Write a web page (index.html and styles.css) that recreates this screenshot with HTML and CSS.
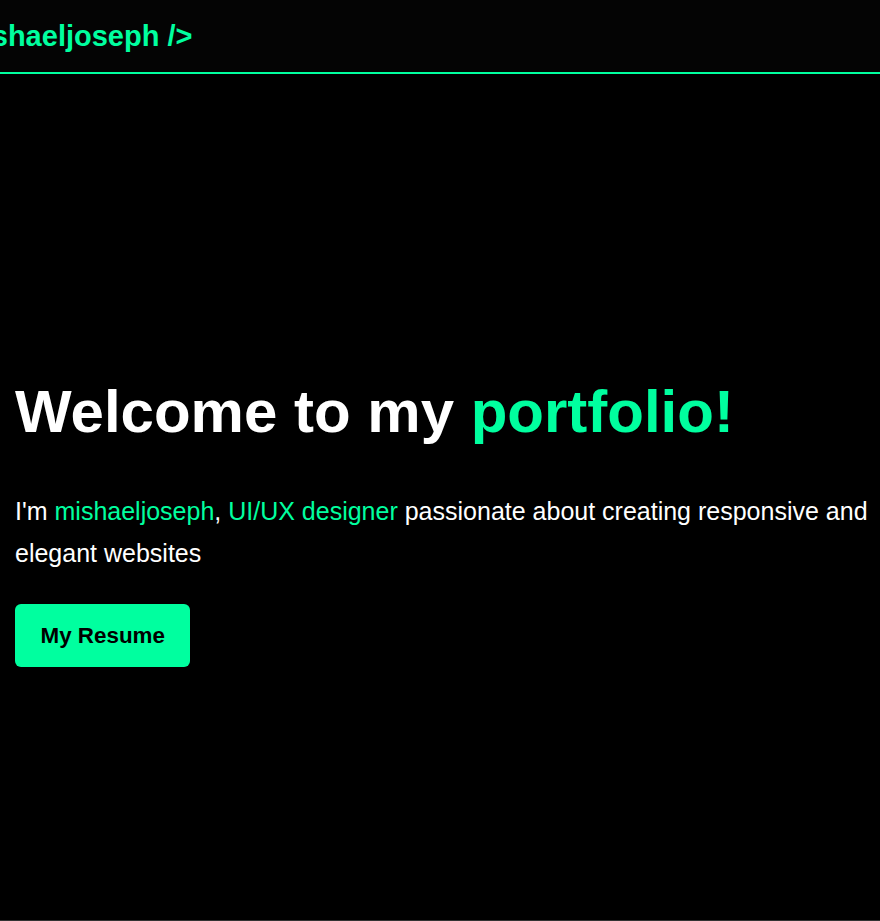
FILE: index.html
```html
<!DOCTYPE html>
<html lang="en">
<head>
<meta charset="utf-8">
<title>mishaeljoseph</title>
<link rel="stylesheet" href="styles.css">
</head>
<body>
<header class="site-header">
  <a class="logo" href="#">&lt;mishaeljoseph /&gt;</a>
</header>
<main class="hero">
  <h1 class="hero-title">Welcome to my <span class="accent">portfolio!</span></h1>
  <p class="hero-text">I'm <span class="accent">mishaeljoseph</span>, <span class="accent">UI/UX designer</span> passionate about creating responsive and elegant websites</p>
  <a class="btn" href="#">My Resume</a>
</main>
</body>
</html>
```

FILE: styles.css
```css
* { box-sizing: border-box; }
html, body {
  margin: 0;
  padding: 0;
  background: #000;
  color: #fff;
  font-family: "Liberation Sans", Arial, sans-serif;
  overflow: hidden;
}
.site-header {
  height: 74px;
  background: #040404;
  border-bottom: 2px solid #00ff9f;
  display: flex;
  align-items: center;
}
.logo {
  color: #00ff9f;
  font-weight: bold;
  font-size: 29px;
  text-decoration: none;
  margin-left: -59px;
  white-space: nowrap;
}
.hero {
  height: 847px;
  padding: 302px 6px 0 15px;
  border-bottom: 1px solid #333;
}
.hero-title {
  margin: 0;
  font-size: 60px;
  line-height: 72px;
  font-weight: bold;
}
.accent { color: #00ff9f; }
.hero-text {
  margin: 42px 0 30px;
  font-size: 25px;
  line-height: 42px;
}
.btn {
  display: inline-block;
  background: #00ff9f;
  color: #000;
  font-weight: bold;
  font-size: 22.4px;
  line-height: 25px;
  padding: 19px 25.5px;
  border-radius: 6px;
  text-decoration: none;
}
```
